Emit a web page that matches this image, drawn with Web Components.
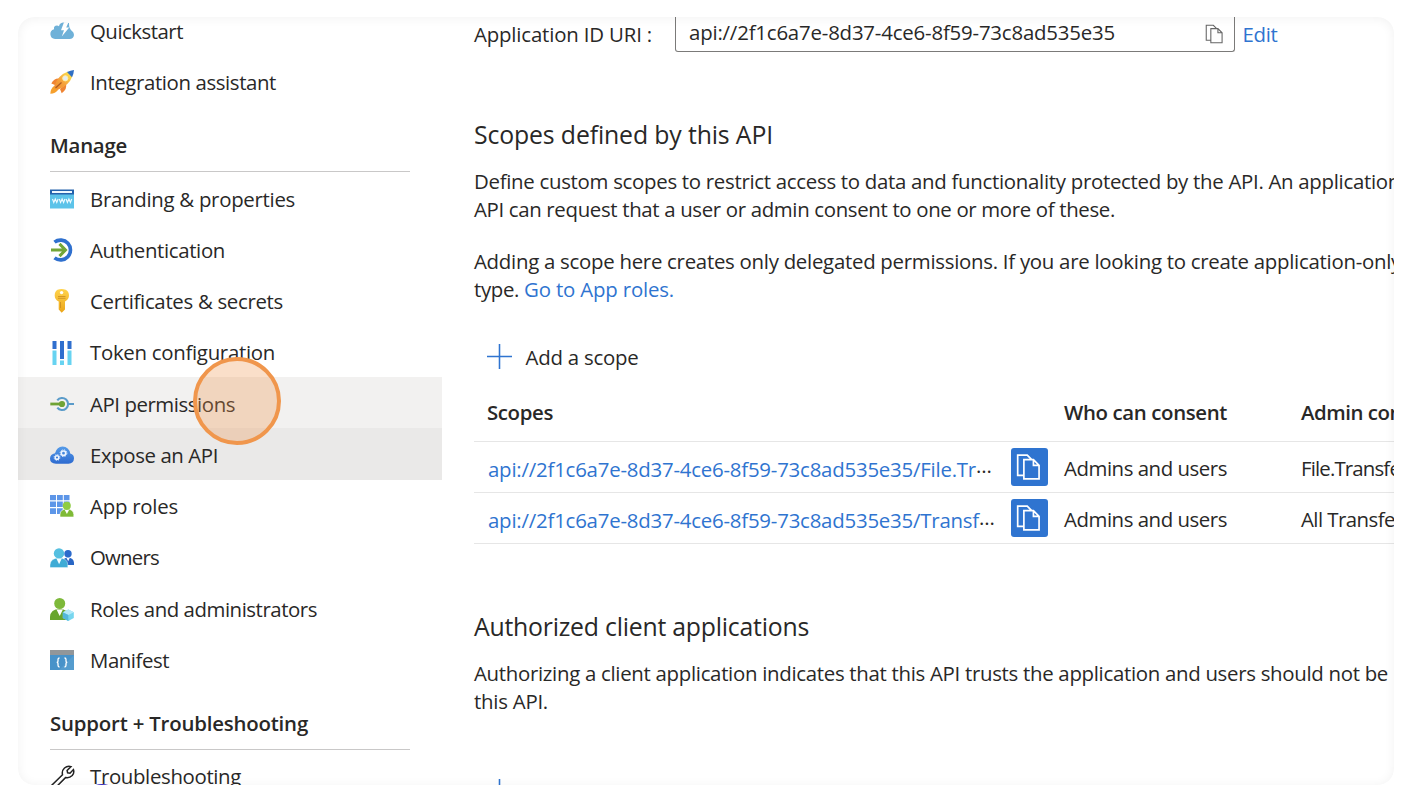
<!DOCTYPE html>
<html lang="en">
<head>
<meta charset="utf-8">
<title>Expose an API</title>
<style>
html,body{margin:0;height:100%;overflow:hidden;background:#fff}
body{font:20.400px/28px "Open Sans","Noto Sans",sans-serif;color:#292827}
</style>
</head>
<body>
<portal-frame>
  <side-nav slot="nav">
    <nav-item icon="quick" w="93">Quickstart</nav-item>
    <nav-item icon="rocket" w="186">Integration assistant</nav-item>
    <nav-heading w="77">Manage</nav-heading>
    <nav-item icon="www" w="205">Branding &amp; properties</nav-item>
    <nav-item icon="auth" w="135">Authentication</nav-item>
    <nav-item icon="key" w="193">Certificates &amp; secrets</nav-item>
    <nav-item icon="token" w="185">Token configuration</nav-item>
    <nav-item icon="perm" w="145" state="hover">API permissions</nav-item>
    <nav-item icon="cloud" w="128" state="active">Expose an API</nav-item>
    <nav-item icon="approles" w="88">App roles</nav-item>
    <nav-item icon="owners" w="69">Owners</nav-item>
    <nav-item icon="admin" w="227">Roles and administrators</nav-item>
    <nav-item icon="manifest" w="79">Manifest</nav-item>
    <nav-heading w="258">Support + Troubleshooting</nav-heading>
    <nav-item icon="wrench" w="151">Troubleshooting</nav-item>
  </side-nav>
  <api-content slot="main"></api-content>
</portal-frame>

<script>
const ICONS = {
quick:`<path fill="#6fb1d8" d="M5 20a5 5 0 0 1-1-9.800Q3.500 6.500 7 6.500Q8 6.500 9 7.300Q9.500 4 13 3.600L19 4Q19 7 19.500 8.600Q20.500 11 22 12Q24 13.500 24 16Q23.500 20 19.500 20z"/><path fill="#fff" d="M14 3.300 18.500 3.300l-2.300 5.200h3l-7.400 9 2.200-6.300h-3z"/>`,
rocket:`<defs><linearGradient id="r" x1="0" y1="1" x2="1" y2="0"><stop offset="0" stop-color="#f08a2c"/><stop offset=".45" stop-color="#f5a23c"/><stop offset=".8" stop-color="#fbd54c"/></linearGradient></defs><path fill="#ef8433" d="M1.300 13.500Q4.500 7.500 10 8.700L5 15zM10 19l6-5q1.500 5-4.300 9.300z"/><path fill="#f6a02d" d="M.3 23.700Q.5 18.500 4 16l4 4Q5.500 23.500.3 23.700z"/><path fill="url(#r)" d="M4 16.500Q8 5 17.500 1.700L22.300 6.500Q19 15.500 7.500 20z"/><path fill="#2f6fc4" d="M17 2.100Q20.500.3 24 0q-.3 4-2 7.200z"/><circle cx="15.300" cy="8.300" r="2.600" fill="#e5ecf2" stroke="#fff0a8"/><path stroke="#ad5a21" stroke-width="1.200" d="m5.500 18 6-5.500"/>`,
www:`<path fill="#5cc3e9" d="M0 3h24v18.500H0z"/><path fill="#2462ac" d="M0 2.500h24v5H0z"/><path fill="#eef8ff" d="M2 3.900h20V6H2z"/><path fill="none" stroke="#eefaff" stroke-width="1.150" d="m2.500 12 1.300 3.500 1.500-3.500 1.500 3.500 1.300-3.500m1.200 0 1.300 3.500 1.500-3.500 1.500 3.500 1.300-3.500m1.200 0 1.300 3.500 1.500-3.500 1.500 3.500 1.300-3.500"/>`,
auth:`<path fill="none" stroke="#2f70ce" stroke-width="3.600" d="M4.500 4.200A9.900 9.900 0 1 1 4.500 19.800"/><path fill="none" stroke="#72a637" stroke-width="3" d="M1 12h13M9.500 5.900 15.500 12l-6 6.100"/>`,
key:`<defs><linearGradient id="k" x1="0" x2="0" y1="0" y2="1"><stop stop-color="#ffd34c"/><stop offset="1" stop-color="#eba519"/></linearGradient></defs><path fill="url(#k)" d="M7.500.8q4-1.500 8.200 0 3.300 1.800 3.300 5.700t-4 6v8l-3.300 3.300-3-3.300v-8q-4-2-4-6T7.500.8z"/><circle cx="11.600" cy="3.600" r="1.700" fill="#fff"/><path stroke="#c98b1f" stroke-width=".8" d="M8 7.500h7.500M8 9.300h7.500M10.500 13v6"/>`,
token:`<path fill="#2f6fce" d="M2.500 0h4v8h-4zM10 0h4v18h-4zM17.500 0h4v8h-4z"/><path fill="#67d3f1" d="M2.500 9.500h4V24h-4zM10 19.500h4V24h-4zM17.500 9.500h4V24h-4z"/>`,
perm:`<path fill="none" stroke="#5a9bc9" stroke-width="2.100" d="M7.300 8.400a6 6 0 1 1 0 7.200M18 12h6"/><path stroke="#6fa335" stroke-width="2.800" d="M.3 12H13"/><circle cx="12" cy="12" r="3.100" fill="#6fa335"/>`,
cloud:`<defs><linearGradient id="c" x1="0" x2="0" y1="0" y2="1"><stop stop-color="#559be8"/><stop offset="1" stop-color="#2e6bd0"/></linearGradient></defs><path fill="url(#c)" d="M6 20.700Q0 20.500 0 15.500q.2-4.500 5-5.300Q7 3.500 12.500 3.500q6.500.3 7.700 7 4 1 3.800 5-.3 5-5.500 5.200z"/><g fill="none" stroke="#edf5ff"><circle cx="7" cy="14.500" r="1.800" stroke-width="1.500"/><circle cx="7" cy="14.500" r="2.900" stroke-width=".9" stroke-dasharray="1.200 1.080"/><circle cx="13.500" cy="10.200" r="2.200" stroke-width="1.600"/><circle cx="13.500" cy="10.200" r="3.400" stroke-width="1" stroke-dasharray="1.400 1.270"/></g>`,
approles:`<path fill="#5d96e8" d="M0 1h6v5.300H0zM7 1h5.800v5.300H7zM13.800 1h5.700v5.300h-5.700zM0 7.500h6V13H0zM7 7.500h5.800V13H7zM13.800 7.500h5.700V13h-5.700zM0 14.200h6v5.700H0zM7 14.200h5.800v5.700H7z"/><path fill="#7fba36" stroke="#fff" stroke-width=".6" d="M10 23v-2.500q.3-5.500 6.800-5.500t7 5.500V23z"/><circle cx="16.800" cy="11.800" r="4" fill="#8fcc42"/><path fill="#fff" d="m14.800 16 2.100 4 2.100-4z"/>`,
owners:`<path fill="#2966c4" d="M12 19v-2.300q.5-5 6-5t6 4.800V19z"/><circle cx="18" cy="7.800" r="3.700" fill="#2c6bcc"/><path fill="#fff" d="m16.500 12 1.700 3.300 1.500-3.300z"/><path fill="#3eabd5" stroke="#fff" stroke-width=".4" d="M0 21.600v-2.700Q.5 12 9 12t8.800 6.800v2.800z"/><circle cx="9" cy="7.400" r="5.200" fill="#55bfe0"/><path fill="#f5fdff" d="m6.400 12.500 2.700 5.700 2.700-5.700z"/>`,
admin:`<path fill="#68a52d" d="M0 23v-3q.5-8 9.500-8t9.500 8v3z"/><circle cx="9.700" cy="6.500" r="5.500" fill="#7db93a"/><path fill="#fff" d="m6.500 12.500 3.200 6.500 3.200-6.500z"/><path fill="#77d6ef" d="m18.300 12.500 5.500 2.700v5.700l-5.500 3-5.500-3v-5.700z"/><path fill="#b5eafa" d="m18.300 12.500 5.500 2.700-5.500 2.900-5.500-2.900z"/><path fill="#54b7dc" d="M18.300 18.100v5.800l-5.500-3v-5.700z"/>`,
manifest:`<path fill="#4892c9" d="M0 2h24v20H0z"/><path fill="#929699" d="M0 2h24v5H0z"/><path fill="#70afd8" opacity=".35" d="M24 7v15H9z"/><path fill="none" stroke="#fff" stroke-width="1.300" d="M9.500 10q-1.500 0-1.500 1.500v1.700q0 1-1.200 1.200 1.200.2 1.200 1.200v1.700Q8 19 9.500 19m5-9q1.500 0 1.500 1.500v1.700q0 1 1.200 1.200-1.200.2-1.200 1.200v1.700q0 1.700-1.500 1.700"/>`,
wrench:`<path fill="none" stroke="#222" stroke-width="1.500" d="m1 21 11.500-11.300q-.9-4 2-6.700 3-2.500 6.500-1.400l-3.900 3.900.5 2.300 2.400.5 3.400-3.700q1.200 3.200-1.200 6-2.700 2.800-6.700 2L4.200 24q-1.500 1-2.900-.3-1.200-1.400-.3-2.700z"/>`,
copy:`<path fill="none" stroke="currentColor" stroke-width="var(--sw,1.300)" d="M6.500 19.500H1.500V1.500H10L14 5.500M7 5.500h8.500l5 5V22.500H7zM15.500 5.500v5h5"/>`,
plus:`<path stroke="#2f74d0" stroke-width="1.500" d="M12 0v24M0 12h24"/>`
};

class BaseElement extends HTMLElement {
  constructor(){super();this.attachShadow({mode:'open'})}
  render(css,html){this.shadowRoot.innerHTML=`<style>:host{display:block}*{box-sizing:border-box}${css}</style>${html}`}
}

/* One line of text whose tracking is tuned to the width in its w attribute. */
customElements.define('fit-text',class extends BaseElement{
  connectedCallback(){
    this.render(':host{display:inline-block;white-space:pre;flex:none}span{display:inline-block}','<span><slot></slot></span>');
    const s=this.shadowRoot.querySelector('span'),n=this.textContent.length,w=+this.getAttribute('w');
    if(w){s.style.letterSpacing=((w-s.getBoundingClientRect().width)/n)+'px'}
  }
});

customElements.define('ui-icon',class extends BaseElement{
  connectedCallback(){
    this.render(':host{width:24px;height:24px;flex:none}svg{display:block;width:100%;height:100%;overflow:visible}',
    `<svg viewBox="0 0 24 24" fill="none">${ICONS[this.getAttribute('name')]}</svg>`);
  }
});

customElements.define('portal-frame',class extends BaseElement{
  connectedCallback(){
    this.render(`:host{padding:17px 16px 25px 18px;height:810px;box-sizing:border-box;width:1410px}
    .card{position:relative;display:grid;grid-template-columns:424px 1fr;height:768px;overflow:hidden;border-radius:16px;background:#fff}
    .edge{position:absolute;inset:0;border-radius:16px;box-shadow:inset 0 1px 11px rgba(0,0,0,.06);pointer-events:none}
    .pointer{position:absolute;left:175px;top:340px;width:88px;height:88px;border-radius:50%;border:4px solid #f0964c;background:rgba(240,150,76,.3)}
    .peek{position:absolute;left:72px;top:766.500px;width:24px;height:14px;border-radius:50%;background:#3b2cc0}
    ::slotted(*){min-width:0}`,
    `<div class="card"><slot name="nav"></slot><slot name="main"></slot><div class="peek"></div><div class="edge"></div><div class="pointer"></div></div>`);
  }
});

customElements.define('side-nav',class extends BaseElement{
  connectedCallback(){this.render(':host{margin-top:-12.800px}','<slot></slot>')}
});

customElements.define('nav-item',class extends BaseElement{
  connectedCallback(){
    this.render(`:host{height:51.250px}
    .row{display:flex;align-items:center;gap:16px;height:100%;padding:2px 0 0 32px}
    :host([state=hover]) .row{background:#f2f1f0}:host([state=active]) .row{background:#eae9e8}
    ui-icon{margin-top:.400px}fit-text{margin-bottom:.400px}`,
    `<div class="row"><ui-icon name="${this.getAttribute('icon')}"></ui-icon><fit-text w="${this.getAttribute('w')}">${this.innerHTML}</fit-text></div>`);
    this.shadowRoot.querySelector('fit-text').connectedCallback();
  }
});

customElements.define('nav-heading',class extends BaseElement{
  connectedCallback(){
    this.render(`:host{height:65.400px;padding:0 32px;box-sizing:border-box;font-weight:600}
    div{height:65px;padding-top:24px;border-bottom:1.500px solid #c9c8c8}`,
    `<div><fit-text w="${this.getAttribute('w')}">${this.innerHTML}</fit-text></div>`);
  }
});

customElements.define('id-field',class extends BaseElement{
  connectedCallback(){
    this.render(`:host{height:36px}
    .row{display:flex;align-items:flex-start;height:35px}
    .label{width:201px;padding-top:3px}
    .box{display:flex;justify-content:space-between;width:560px;height:35px;padding:1px 9px 0 13px;border:1.500px solid #7b7a79;border-top:0;border-radius:0 0 3px 3px}
    ui-icon{width:20px;height:20px;margin-top:6px;color:#666}
    .edit{color:#2f74d0;margin:3px 0 0 7.500px}`,
    `<div class="row"><div class="label"><fit-text w="178">Application ID URI :</fit-text></div>
    <div class="box"><fit-text w="426">api://2f1c6a7e-8d37-4ce6-8f59-73c8ad535e35</fit-text><ui-icon name="copy"></ui-icon></div>
    <fit-text class="edit" w="35">Edit</fit-text></div>`);
  }
});

customElements.define('section-block',class extends BaseElement{
  connectedCallback(){
    this.render(`h2{margin:0;height:48px;font-size:24.800px;line-height:31px;font-weight:400}`,
    `<h2><fit-text w="${this.getAttribute('w')}">${this.getAttribute('heading')}</fit-text></h2><slot></slot>`);
  }
});

customElements.define('command-bar',class extends BaseElement{
  connectedCallback(){
    this.render(`:host{height:52px}div{display:flex;align-items:center;gap:13.500px;height:100%;padding-left:13px}ui-icon{margin-bottom:2px;width:25px;height:25px}fit-text{margin-bottom:1px}`,
    `<div><ui-icon name="plus"></ui-icon><fit-text w="${this.getAttribute('w')}">${this.textContent}</fit-text></div>`);
  }
});

customElements.define('scope-row',class extends BaseElement{
  connectedCallback(){
    const a=n=>this.getAttribute(n);
    this.render(`.r{display:grid;grid-template-columns:537px 53px 237px 1fr;align-items:center;height:51.250px;border-bottom:1px solid #e6e6e6}
    .link{display:flex;padding:4.500px 0 0 14px;color:#2f74d0}.dots{color:#292827;position:relative;top:-3.500px}
    .copy{display:grid;place-items:center;width:37px;height:38px;border-radius:3px;background:#2f74d0;color:#fff;--sw:1.500}
    ui-icon{width:27px;height:28px}.r>fit-text{margin-top:3px}`,
    `<div class="r"><div class="link"><fit-text w="${a('lw')}">${a('link')}</fit-text><fit-text class="dots" w="15">…</fit-text></div>
    <div class="copy"><ui-icon name="copy"></ui-icon></div><fit-text w="163">Admins and users</fit-text><fit-text w="${a('nw')}">${a('name')}</fit-text></div>`);
  }
});

customElements.define('scope-table',class extends BaseElement{
  connectedCallback(){
    this.render(`.h{display:grid;grid-template-columns:590px 237px 1fr;align-items:center;height:58.500px;padding-top:0;border-bottom:1.500px solid #e6e6e6;font-weight:600}.h :first-child{padding-left:13px}`,
    `<div class="h"><fit-text w="66">Scopes</fit-text><fit-text w="163">Who can consent</fit-text><fit-text w="101">Admin con</fit-text></div><slot></slot>`);
  }
});

customElements.define('api-content',class extends BaseElement{
  connectedCallback(){
    this.render(`:host{padding-left:32px;overflow:hidden}
    p{margin:0;white-space:nowrap;height:28px;display:flex}
    .scopes{margin-top:66px}.gap{margin-top:24px}a{color:#2f74d0}
    .bar{margin-top:28px}.auth{margin-top:67px}.last{margin-top:51.500px}`,
    `<id-field></id-field>
    <section-block class="scopes" w="299" heading="Scopes defined by this API">
      <p><fit-text w="926">Define custom scopes to restrict access to data and functionality protected by the API. An application</fit-text></p>
      <p><fit-text w="641">API can request that a user or admin consent to one or more of these.</fit-text></p>
      <p class="gap"><fit-text w="927">Adding a scope here creates only delegated permissions. If you are looking to create application-only</fit-text></p>
      <p><fit-text w="50">type. </fit-text><a><fit-text w="150">Go to App roles.</fit-text></a></p>
    </section-block>
    <command-bar class="bar" w="113">Add a scope</command-bar>
    <scope-table>
      <scope-row lw="488" link="api://2f1c6a7e-8d37-4ce6-8f59-73c8ad535e35/File.Tr" name="File.Transfe" nw="99"></scope-row>
      <scope-row lw="491" link="api://2f1c6a7e-8d37-4ce6-8f59-73c8ad535e35/Transf" name="All Transfe" nw="94"></scope-row>
    </scope-table>
    <section-block class="auth" w="335" heading="Authorized client applications">
      <p><fit-text w="914">Authorizing a client application indicates that this API trusts the application and users should not be</fit-text></p>
      <p><fit-text w="74">this API.</fit-text></p>
    </section-block>
    <command-bar class="last" w="199">Add a client application</command-bar>`);
  }
});
</script>
</body>
</html>
